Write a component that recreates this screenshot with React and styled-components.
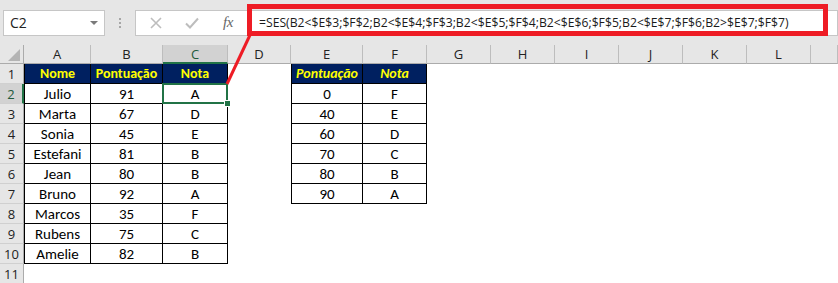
import React from "react";
import styled, { createGlobalStyle, css } from "styled-components";

const GlobalStyle = createGlobalStyle`
  html, body { margin: 0; padding: 0; background: #ffffff; }
  #root { width: 838px; height: 283px; }
`;

const UI_FONT = `"Segoe UI", "Open Sans", "Noto Sans", sans-serif`;
const CELL_FONT = `Carlito, Calibri, Lato, "Noto Sans", sans-serif`;
const GREEN = "#217346";
const RED = "#ee1c25";

const Page = styled.div`
  position: relative;
  width: 838px;
  height: 283px;
  overflow: hidden;
  background: #ffffff;
  display: flex;
  flex-direction: column;
`;

const TopBar = styled.div`
  height: 45px;
  flex: 0 0 45px;
  background: #e6e6e6;
  display: flex;
  align-items: center;
  padding-left: 3px;
  box-sizing: border-box;
`;

const NameBox = styled.div`
  width: 102px;
  height: 26px;
  box-sizing: border-box;
  background: #fff;
  border: 1px solid #c6c6c6;
  display: flex;
  align-items: center;
  justify-content: space-between;
  padding: 0 6px 0 6px;
  font-family: ${UI_FONT};
  font-size: 14px;
  color: #222;
`;

const DropArrow = styled.span`
  width: 0;
  height: 0;
  border-left: 4px solid transparent;
  border-right: 4px solid transparent;
  border-top: 4px solid #7a7a7a;
  margin-top: 1px;
`;

const Grip = styled.div`
  width: 30px;
  display: flex;
  flex-direction: column;
  align-items: center;
  gap: 2px;
  & > span {
    width: 2px;
    height: 2px;
    background: #a6a6a6;
  }
`;

const FxButtons = styled.div`
  width: 112px;
  height: 26px;
  box-sizing: border-box;
  background: #fff;
  border: 1px solid #c6c6c6;
  border-right: none;
  display: flex;
  align-items: center;
  padding-left: 10px;
  gap: 16px;
`;

const IconSlot = styled.div`
  width: 20px;
  height: 20px;
  display: flex;
  align-items: center;
  justify-content: center;
`;

const FxText = styled.span`
  font-family: "Liberation Serif", "DejaVu Serif", serif;
  font-style: italic;
  font-size: 15px;
  color: #666;
  letter-spacing: -0.5px;
`;

const FormulaInput = styled.div`
  flex: 1;
  height: 26px;
  box-sizing: border-box;
  background: #fff;
  border: 1px solid #c6c6c6;
  display: flex;
  align-items: center;
  padding-left: 11px;
  font-family: ${UI_FONT};
  font-size: 12.2px;
  color: #1a1a1a;
  white-space: nowrap;
`;

const RedBox = styled.div`
  position: absolute;
  left: 247px;
  top: 4px;
  width: 581px;
  height: 32px;
  box-sizing: border-box;
  border: 5px solid ${RED};
  pointer-events: none;
`;

const Arrow = styled.svg`
  position: absolute;
  left: 0;
  top: 0;
  pointer-events: none;
`;

const Sheet = styled.div`
  display: grid;
  grid-template-columns: 24px 67px 72px 65px 63px 72px 64px 64px 64px 64px 64px 64px 64px 1fr;
  grid-template-rows: 19px repeat(11, 20px);
`;

const Corner = styled.div`
  background: #e6e6e6;
  border-bottom: 1px solid #ababab;
  border-right: 1px solid #ababab;
  box-sizing: border-box;
  position: relative;
  &::after {
    content: "";
    position: absolute;
    right: 3px;
    bottom: 2px;
    width: 0;
    height: 0;
    border-left: 12px solid transparent;
    border-bottom: 12px solid #b4b4b4;
  }
`;

const ColHead = styled.div`
  background: ${(p) => (p.$sel ? "#d2d2d2" : "#e6e6e6")};
  border-right: 1px solid #bdbdbd;
  border-bottom: ${(p) => (p.$sel ? `2px solid ${GREEN}` : "1px solid #ababab")};
  box-sizing: border-box;
  display: flex;
  align-items: center;
  justify-content: center;
  font-family: ${UI_FONT};
  font-size: 13px;
  color: ${(p) => (p.$sel ? "#1e5a3c" : "#222")};
  padding-top: ${(p) => (p.$sel ? "1px" : "0")};
`;

const RowHead = styled.div`
  background: ${(p) => (p.$sel ? "#d2d2d2" : "#e6e6e6")};
  border-bottom: 1px solid #d0d0d0;
  border-right: ${(p) => (p.$sel ? `2px solid ${GREEN}` : "1px solid #ababab")};
  box-sizing: border-box;
  display: flex;
  align-items: center;
  justify-content: center;
  font-family: ${UI_FONT};
  font-size: 13px;
  color: ${(p) => (p.$sel ? "#1e5a3c" : "#222")};
`;

const Cell = styled.div`
  box-sizing: border-box;
  display: flex;
  align-items: center;
  justify-content: center;
  font-family: ${CELL_FONT};
  font-size: 15px;
  color: #000;
  position: relative;
  white-space: nowrap;
  ${(p) =>
    p.$table &&
    css`
      border-right: 1px solid #000;
      border-bottom: 1px solid #000;
    `}
  ${(p) =>
    p.$first &&
    css`
      border-left: 1px solid #000;
    `}
  ${(p) =>
    p.$head &&
    css`
      background: #002060;
      color: #ffff00;
      font-weight: 700;
      font-size: 14px;
      font-style: ${p.$italic ? "italic" : "normal"};
    `}
  ${(p) =>
    p.$sel &&
    css`
      &::after {
        content: "";
        position: absolute;
        left: -1px;
        top: -1px;
        right: -1px;
        bottom: -1px;
        border: 2px solid ${GREEN};
      }
      &::before {
        content: "";
        position: absolute;
        right: -4px;
        bottom: -4px;
        width: 5px;
        height: 5px;
        background: ${GREEN};
        border: 1px solid #fff;
        z-index: 2;
      }
    `}
`;

const cols = ["A", "B", "C", "D", "E", "F", "G", "H", "I", "J", "K", "L", ""];

const table1 = [
  ["Nome", "Pontuação", "Nota"],
  ["Julio", "91", "A"],
  ["Marta", "67", "D"],
  ["Sonia", "45", "E"],
  ["Estefani", "81", "B"],
  ["Jean", "80", "B"],
  ["Bruno", "92", "A"],
  ["Marcos", "35", "F"],
  ["Rubens", "75", "C"],
  ["Amelie", "82", "B"],
];

const table2 = [
  ["Pontuação", "Nota"],
  ["0", "F"],
  ["40", "E"],
  ["60", "D"],
  ["70", "C"],
  ["80", "B"],
  ["90", "A"],
];

const formula =
  "=SES(B2<$E$3;$F$2;B2<$E$4;$F$3;B2<$E$5;$F$4;B2<$E$6;$F$5;B2<$E$7;$F$6;B2>$E$7;$F$7)";

function cellFor(r, c) {
  if (c <= 2 && r < table1.length) {
    return {
      text: table1[r][c],
      table: true,
      first: c === 0,
      head: r === 0,
      italic: false,
      sel: r === 1 && c === 2,
    };
  }
  if ((c === 4 || c === 5) && r < table2.length) {
    return {
      text: table2[r][c - 4],
      table: true,
      first: c === 4,
      head: r === 0,
      italic: true,
      sel: false,
    };
  }
  return { text: "", table: false };
}

export default function App() {
  const rows = [];
  for (let r = 0; r < 11; r++) {
    rows.push(
      <RowHead key={`rh${r}`} $sel={r === 1}>
        {r + 1}
      </RowHead>
    );
    cols.forEach((_, c) => {
      const d = cellFor(r, c);
      rows.push(
        <Cell
          key={`c${r}-${c}`}
          $table={d.table}
          $first={d.first}
          $head={d.head}
          $italic={d.italic}
          $sel={d.sel}
        >
          {d.text}
        </Cell>
      );
    });
  }

  return (
    <>
      <GlobalStyle />
      <Page>
        <TopBar>
          <NameBox>
            <span>C2</span>
            <DropArrow />
          </NameBox>
          <Grip>
            <span />
            <span />
            <span />
          </Grip>
          <FxButtons>
            <IconSlot>
              <svg width="12" height="12" viewBox="0 0 12 12">
                <path d="M1 1 L11 11 M11 1 L1 11" stroke="#bdbdbd" strokeWidth="1.6" fill="none" />
              </svg>
            </IconSlot>
            <IconSlot>
              <svg width="14" height="12" viewBox="0 0 14 12">
                <path d="M1 6.5 L5 10.5 L13 1.5" stroke="#bdbdbd" strokeWidth="2" fill="none" />
              </svg>
            </IconSlot>
            <IconSlot>
              <FxText>fx</FxText>
            </IconSlot>
          </FxButtons>
          <FormulaInput>{formula}</FormulaInput>
        </TopBar>
        <Sheet>
          <Corner />
          {cols.map((l, i) => (
            <ColHead key={`h${i}`} $sel={i === 2}>
              {l}
            </ColHead>
          ))}
          {rows}
        </Sheet>
        <RedBox />
        <Arrow width="838" height="283">
          <line x1="250" y1="35" x2="227" y2="84" stroke={RED} strokeWidth="3" />
        </Arrow>
      </Page>
    </>
  );
}
